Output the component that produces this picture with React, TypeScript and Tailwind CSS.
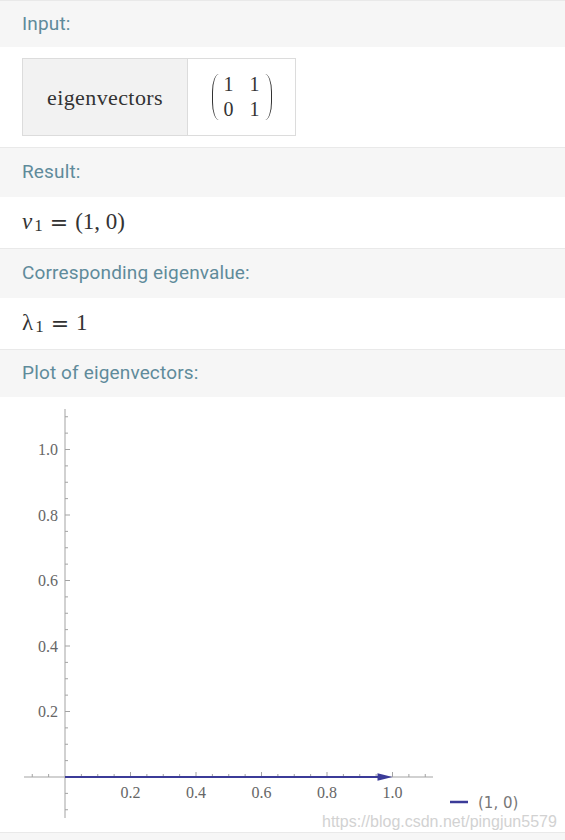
import React from "react";

const headerFont = { fontFamily: "Roboto, 'Liberation Sans', sans-serif" };
const serif = { fontFamily: "'Liberation Serif', 'DejaVu Serif', serif" };
const eqFont = { fontFamily: "'DejaVu Serif', serif" };

function PodHeader({ label, hClass }: { label: string; hClass: string }) {
  return (
    <div
      className={`flex items-center border-t border-[#e9e9e9] bg-[#f6f6f6] pl-[22px] text-[19px] tracking-[0.15px] text-[#5f8b9b] ${hClass}`}
      style={headerFont}
    >
      {label}
    </div>
  );
}

function Paren({ side }: { side: "l" | "r" }) {
  return side === "l" ? (
    <div className="h-[46px] w-[7px] rounded-tl-[9px_23px] rounded-bl-[9px_23px] border-l-[1.7px] border-[#333]" />
  ) : (
    <div className="h-[46px] w-[7px] rounded-tr-[9px_23px] rounded-br-[9px_23px] border-r-[1.7px] border-[#333]" />
  );
}

function Plot() {
  const ox = 65;
  const oy = 380;
  const s = 327.5;
  const axis = "#a3a3a3";
  const label = "#666666";
  const yTicks: number[] = [];
  for (let i = -2; i <= 22; i++) if (i !== 0) yTicks.push(i);
  const xTicks: number[] = [];
  for (let i = -2; i <= 22; i++) if (i !== 0) xTicks.push(i);
  return (
    <svg width="565" height="435" viewBox="0 0 565 435" className="block">
      <line x1={24} y1={oy} x2={433} y2={oy} stroke={axis} strokeWidth={1} />
      <line x1={ox} y1={12} x2={ox} y2={421} stroke={axis} strokeWidth={1} />
      {yTicks.map((i) => {
        const y = oy - (i * s) / 20;
        const major = i % 4 === 0;
        return (
          <line key={"y" + i} x1={ox} y1={y} x2={ox + (major ? 5 : 3)} y2={y} stroke={axis} strokeWidth={1} />
        );
      })}
      {xTicks.map((i) => {
        const x = ox + (i * s) / 20;
        const major = i % 4 === 0;
        return (
          <line key={"x" + i} x1={x} y1={oy} x2={x} y2={oy - (major ? 5 : 3)} stroke={axis} strokeWidth={1} />
        );
      })}
      {[0.2, 0.4, 0.6, 0.8, 1.0].map((v) => (
        <text
          key={"yl" + v}
          x={58}
          y={oy - v * s + 5.5}
          textAnchor="end"
          fontSize={16}
          fill={label}
          style={serif}
        >
          {v.toFixed(1)}
        </text>
      ))}
      {[0.2, 0.4, 0.6, 0.8, 1.0].map((v) => (
        <text
          key={"xl" + v}
          x={ox + v * s}
          y={oy + 21}
          textAnchor="middle"
          fontSize={16}
          fill={label}
          style={serif}
        >
          {v.toFixed(1)}
        </text>
      ))}
      <line x1={ox} y1={oy} x2={ox + s - 12} y2={oy} stroke="#3b3b98" strokeWidth={2} />
      <path d={`M ${ox + s} ${oy} L ${ox + s - 15} ${oy - 3.8} L ${ox + s - 15} ${oy + 3.8} Z`} fill="#3b3b98" />
      <line x1={450} y1={405} x2={468} y2={405} stroke="#3b3b98" strokeWidth={2.5} />
      <text x={478} y={411} fontSize={15} fill="#777" style={{ fontFamily: "'DejaVu Sans', sans-serif" }}>
        (1, 0)
      </text>
      <text
        x={322}
        y={430}
        fontSize={16}
        fill="#d2d2d2"
        style={{ fontFamily: "'Liberation Sans', Arial, sans-serif" }}
      >
        https://blog.csdn.net/pingjun5579
      </text>
    </svg>
  );
}

export default function App() {
  return (
    <div className="w-[565px] h-[840px] overflow-hidden bg-white">
      <PodHeader label="Input:" hClass="h-[47px]" />
      <div className="h-[100px] pl-[22px] pt-[11px]">
        <div className="inline-flex h-[78px] border border-[#dcdcdc]">
          <div
            className="flex w-[164px] items-center justify-center bg-[#f2f2f2] text-[22px] tracking-[0.4px] text-[#333]"
            style={serif}
          >
            eigenvectors
          </div>
          <div className="w-px bg-[#dcdcdc]" />
          <div className="flex w-[107px] items-center justify-center gap-[5px]" style={serif}>
            <Paren side="l" />
            <div className="grid grid-cols-2 gap-x-[16px] text-[20px] leading-[25px] text-[#333]">
              <span>1</span>
              <span>1</span>
              <span>0</span>
              <span>1</span>
            </div>
            <Paren side="r" />
          </div>
        </div>
      </div>
      <PodHeader label="Result:" hClass="h-[50px]" />
      <div className="flex h-[51px] items-center pl-[22px] text-[23px] text-[#333]" style={serif}>
        <span className="italic">v</span>
        <sub className="relative top-[3px] ml-[2px] text-[17px]">1</sub>
        <span className="ml-[7px] text-[22px]" style={eqFont}>=</span>
        <span className="ml-[7px]">(1, 0)</span>
      </div>
      <PodHeader label="Corresponding eigenvalue:" hClass="h-[50px]" />
      <div className="flex h-[51px] items-center pl-[22px] text-[23px] text-[#333]" style={serif}>
        <span>λ</span>
        <sub className="relative top-[3px] ml-[2px] text-[17px]">1</sub>
        <span className="ml-[7px] text-[22px]" style={eqFont}>=</span>
        <span className="ml-[7px]">1</span>
      </div>
      <PodHeader label="Plot of eigenvectors:" hClass="h-[48px]" />
      <div className="h-[435px]">
        <Plot />
      </div>
      <div className="h-[20px] border-t border-[#e9e9e9] bg-[#f6f6f6]" />
    </div>
  );
}
